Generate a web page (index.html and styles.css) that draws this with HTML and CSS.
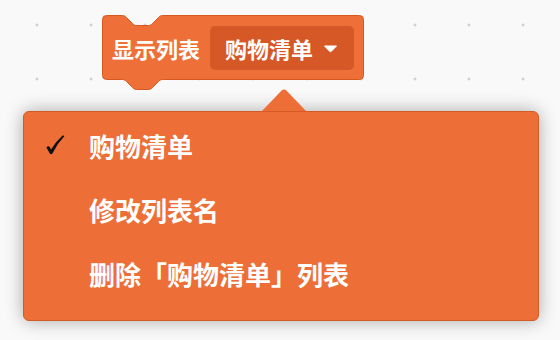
FILE: index.html
```html
<!DOCTYPE html>
<html lang="zh">
<head>
<meta charset="utf-8">
<title>显示列表</title>
<link rel="stylesheet" href="styles.css">
</head>
<body>
<div class="workspace">
  <div class="block">
    <svg class="block-shape" width="263" height="77" viewBox="0 0 263 77">
      <path transform="translate(0.5 0.5)" d="M0 4 A4 4 0 0 1 4 0 H20 c2 0 3 1 4 2 l6 6 c1 1 2 2 4 2 h12 c2 0 3 -1 4 -2 l6 -6 c1 -1 2 -2 4 -2 H257 a4 4 0 0 1 4 4 V60 a4 4 0 0 1 -4 4 H60 c-2 0 -3 1 -4 2 l-6 6 c-1 1 -2 2 -4 2 h-12 c-2 0 -3 -1 -4 -2 l-6 -6 c-1 -1 -2 -2 -4 -2 H4 a4 4 0 0 1 -4 -4 Z"/>
    </svg>
    <span class="label">显示列表</span>
    <div class="dropdown">
      <span class="dropdown-text">购物清单</span>
      <svg class="caret" width="15" height="8" viewBox="0 0 15 8"><path d="M1.5 1 H13.5 L8.2 6.4 Q7.5 7.1 6.8 6.4 Z"/></svg>
    </div>
  </div>
  <div class="menu">
    <svg class="menu-arrow" width="44" height="22" viewBox="0 0 44 22"><path d="M0 22 L19.6 1.6 Q22 -0.8 24.4 1.6 L44 22 Z"/></svg>
    <ul class="menu-list">
      <li class="item"><span class="check"><svg width="20" height="20" viewBox="0 0 20 20"><path d="M1.4 12.4 Q2.8 10.6 4.4 11.6 L6 14.4 Q11 6.5 17.6 0.6 Q18.9 0.1 19.3 1.3 Q12.2 8.6 7.4 18.4 Q6.3 19.8 5 18.7 Z"/></svg></span><span class="item-text">购物清单</span></li>
      <li class="item"><span class="check"></span><span class="item-text">修改列表名</span></li>
      <li class="item"><span class="check"></span><span class="item-text">删除「购物清单」列表</span></li>
    </ul>
  </div>
</div>
</body>
</html>
```

FILE: styles.css
```css
html, body {
  margin: 0;
  padding: 0;
}

body {
  font-family: "Noto Sans CJK SC", "Noto Sans", sans-serif;
  background: #f9f9f9;
}

.workspace {
  position: relative;
  width: 560px;
  height: 340px;
  overflow: hidden;
  background-color: #f9f9f9;
  background-image: radial-gradient(circle, #d2d2d2 0, #d2d2d2 1.1px, rgba(210,210,210,0) 1.8px);
  background-size: 54px 54px;
  background-position: 10px -2px;
}

/* Scratch block on the canvas */
.block {
  position: absolute;
  left: 102px;
  top: 15px;
  width: 262px;
  height: 65px;
  box-sizing: border-box;
  padding: 0 10px;
  display: flex;
  align-items: center;
  gap: 10px;
  color: #fff;
  font-weight: 700;
}

.block-shape {
  position: absolute;
  left: 0;
  top: 0;
  overflow: visible;
}

.block-shape path {
  fill: #ee7038;
  stroke: #d5581f;
  stroke-width: 1;
}

.label {
  position: relative;
  font-size: 22px;
  line-height: 24px;
  white-space: nowrap;
}

.dropdown {
  position: relative;
  height: 44px;
  margin-top: 1px;
  box-sizing: border-box;
  padding: 0 16px 0 15px;
  display: flex;
  align-items: center;
  gap: 10px;
  background: #d65827;
  border-radius: 5px;
}

.dropdown-text {
  font-size: 22px;
  line-height: 24px;
  white-space: nowrap;
}

.caret {
  display: block;
  margin-top: 1px;
}

.caret path {
  fill: #fff;
  stroke: #fff;
  stroke-width: 1;
  stroke-linejoin: round;
}

/* Dropdown menu overlay */
.menu {
  position: absolute;
  left: 23px;
  top: 111px;
  width: 516px;
  height: 210px;
  box-sizing: border-box;
  background: #ed6f37;
  border: 1px solid #d45a26;
  border-radius: 6px;
  box-shadow: 0 0 18px rgba(0, 0, 0, 0.32);
}

.menu-arrow {
  position: absolute;
  left: 238px;
  top: -23px;
  display: block;
}

.menu-arrow path {
  fill: #ed6f37;
}

.menu-list {
  list-style: none;
  margin: 0;
  padding: 2px 0 0 0;
}

.item {
  height: 64px;
  display: flex;
  align-items: center;
  padding-left: 21px;
  color: #fff;
  font-size: 26px;
  font-weight: 700;
  line-height: 64px;
  white-space: nowrap;
}

.check {
  width: 20px;
  height: 20px;
  margin-right: 24px;
  margin-top: -2px;
  flex: none;
  display: block;
}

.check svg {
  display: block;
}

.check path {
  fill: #111;
}
```
